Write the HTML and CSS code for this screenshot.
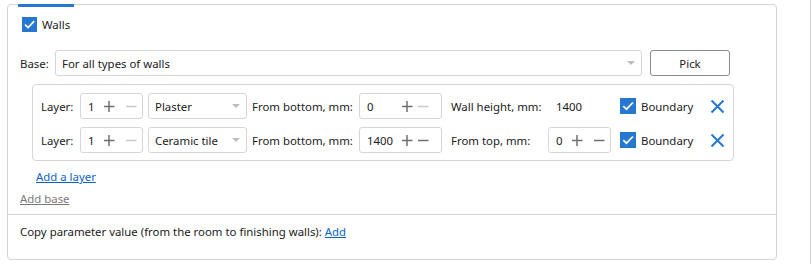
FILE: index.html
```html
<!DOCTYPE html>
<html lang="en">
<head>
    <meta charset="UTF-8">
    <title>Finishing walls</title>
    <link rel="stylesheet" href="styles.css">
</head>
<body>
    <div class="panel">
        <!-- Active tab marker -->
        <div class="tab-marker"></div>

        <div class="top-section">
            <!-- Walls -->
            <label class="check-row">
                <svg class="checkbox small" viewBox="0 0 15 15"><rect width="15" height="15" fill="#2677d1"/><path d="M3 7.6 L6.1 10.6 L12.2 4.2" fill="none" stroke="#fff" stroke-width="1.7"/></svg>
                <span>Walls</span>
            </label>

            <!-- Base -->
            <div class="base-row">
                <span class="base-label">Base:</span>
                <div class="combo wide">
                    <span>For all types of walls</span>
                    <svg class="arrow" viewBox="0 0 8 4"><path d="M0 0 L8 0 L4 4 Z" fill="#bdbdbd"/></svg>
                </div>
                <button class="pick">Pick</button>
            </div>

            <!-- Layers -->
            <div class="layers">
                <div class="layer-row">
                    <span class="lbl">Layer:</span>
                    <div class="spin">
                        <span class="val">1</span>
                        <svg class="btn" viewBox="0 0 11 11"><path d="M0 5.5 H11 M5.5 0 V11" stroke="#707070" stroke-width="1.5"/></svg>
                        <svg class="btn" viewBox="0 0 11 11"><path d="M0 5.5 H11" stroke="#c9c9c9" stroke-width="1.5"/></svg>
                    </div>
                    <div class="combo">
                        <span>Plaster</span>
                        <svg class="arrow" viewBox="0 0 8 4"><path d="M0 0 L8 0 L4 4 Z" fill="#bdbdbd"/></svg>
                    </div>
                    <span class="lbl">From bottom, mm:</span>
                    <div class="spin mm">
                        <span class="val">0</span>
                        <svg class="btn" viewBox="0 0 11 11"><path d="M0 5.5 H11 M5.5 0 V11" stroke="#707070" stroke-width="1.5"/></svg>
                        <svg class="btn" viewBox="0 0 11 11"><path d="M0 5.5 H11" stroke="#c9c9c9" stroke-width="1.5"/></svg>
                    </div>
                    <span class="lbl pad">Wall height, mm:</span>
                    <span class="plain">1400</span>
                    <label class="boundary">
                        <svg class="checkbox" viewBox="0 0 16 16"><rect width="16" height="16" fill="#2677d1"/><path d="M3.3 8.1 L6.5 11.2 L12.9 4.5" fill="none" stroke="#fff" stroke-width="1.7"/></svg>
                        <span>Boundary</span>
                    </label>
                    <svg class="remove" viewBox="0 0 15 15"><path d="M1.5 1.5 L13.5 13.5 M13.5 1.5 L1.5 13.5" stroke="#2677d1" stroke-width="2"/></svg>
                </div>
                <div class="layer-row">
                    <span class="lbl">Layer:</span>
                    <div class="spin">
                        <span class="val">1</span>
                        <svg class="btn" viewBox="0 0 11 11"><path d="M0 5.5 H11 M5.5 0 V11" stroke="#707070" stroke-width="1.5"/></svg>
                        <svg class="btn" viewBox="0 0 11 11"><path d="M0 5.5 H11" stroke="#c9c9c9" stroke-width="1.5"/></svg>
                    </div>
                    <div class="combo">
                        <span>Ceramic tile</span>
                        <svg class="arrow" viewBox="0 0 8 4"><path d="M0 0 L8 0 L4 4 Z" fill="#bdbdbd"/></svg>
                    </div>
                    <span class="lbl">From bottom, mm:</span>
                    <div class="spin mm">
                        <span class="val">1400</span>
                        <svg class="btn" viewBox="0 0 11 11"><path d="M0 5.5 H11 M5.5 0 V11" stroke="#707070" stroke-width="1.5"/></svg>
                        <svg class="btn" viewBox="0 0 11 11"><path d="M0 5.5 H11" stroke="#707070" stroke-width="1.5"/></svg>
                    </div>
                    <span class="lbl pad">From top, mm:</span>
                    <div class="spin">
                        <span class="val">0</span>
                        <svg class="btn" viewBox="0 0 11 11"><path d="M0 5.5 H11 M5.5 0 V11" stroke="#707070" stroke-width="1.5"/></svg>
                        <svg class="btn" viewBox="0 0 11 11"><path d="M0 5.5 H11" stroke="#707070" stroke-width="1.5"/></svg>
                    </div>
                    <label class="boundary">
                        <svg class="checkbox" viewBox="0 0 16 16"><rect width="16" height="16" fill="#2677d1"/><path d="M3.3 8.1 L6.5 11.2 L12.9 4.5" fill="none" stroke="#fff" stroke-width="1.7"/></svg>
                        <span>Boundary</span>
                    </label>
                    <svg class="remove" viewBox="0 0 15 15"><path d="M1.5 1.5 L13.5 13.5 M13.5 1.5 L1.5 13.5" stroke="#2677d1" stroke-width="2"/></svg>
                </div>
            </div>

            <a class="link add-layer" href="#">Add a layer</a>
            <a class="link muted" href="#">Add base</a>
        </div>

        <!-- Copy parameter -->
        <div class="bottom-section">
            Copy parameter value (from the room to finishing walls): <a class="link" href="#">Add</a>
        </div>
    </div>

    <div class="edge"></div>
</body>
</html>
```

FILE: styles.css
```css
body {
    margin: 0;
    width: 812px;
    height: 264px;
    overflow: hidden;
    background: #fff;
    color: #1b1b1b;
    font-family: "Noto Sans", "Segoe UI", sans-serif;
    font-size: 11.4px;
    display: flex;
    align-items: flex-start;
}

.panel {
    position: relative;
    box-sizing: border-box;
    width: 770px;
    height: 256px;
    margin: 4px 0 0 7px;
    border: 1px solid #d3d3d3;
    border-radius: 4px;
}

.tab-marker {
    position: absolute;
    left: 10px;
    top: -1px;
    width: 56px;
    height: 3px;
    background: #2677d1;
}

.edge {
    width: 1px;
    height: 264px;
    margin-left: auto;
    margin-right: 1px;
    background: #d3d3d3;
}

.top-section {
    padding: 12px 12px 7px;
    display: flex;
    flex-direction: column;
    align-items: flex-start;
}

/* Checkbox rows */
.check-row {
    display: flex;
    align-items: center;
    gap: 5px;
    height: 15px;
    margin-left: 2px;
}

.checkbox {
    width: 16px;
    height: 16px;
    flex: none;
}

.checkbox.small {
    width: 15px;
    height: 15px;
}

/* Base */
.base-row {
    display: flex;
    align-items: center;
    margin-top: 18px;
    height: 26px;
}

.base-label {
    width: 35px;
}

.combo {
    box-sizing: border-box;
    height: 26px;
    width: 99px;
    border: 1px solid #d6d6d6;
    border-radius: 3px;
    padding: 0 6px;
    display: flex;
    align-items: center;
    justify-content: space-between;
    white-space: nowrap;
}

.combo.wide {
    width: 587px;
}

.arrow {
    width: 8px;
    height: 4px;
    flex: none;
}

.pick {
    box-sizing: border-box;
    width: 80px;
    height: 26px;
    margin-left: 8px;
    background: #fff;
    border: 1px solid #8a8a8a;
    border-radius: 3px;
    font: inherit;
    color: #1b1b1b;
    padding: 0;
}

/* Layers */
.layers {
    box-sizing: border-box;
    width: 702px;
    margin: 8px 0 0 12px;
    padding: 8px 8px 7px;
    border: 1px solid #d6d6d6;
    border-radius: 4px;
    display: flex;
    flex-direction: column;
    gap: 8px;
}

.layer-row {
    display: grid;
    grid-template-columns: 34px 63px 99px 102px 83px 96px 63px 80px 15px;
    column-gap: 5px;
    align-items: center;
    height: 26px;
    white-space: nowrap;
}

.lbl.pad {
    padding-left: 4px;
}

.plain {
    padding-left: 8px;
}

.spin {
    box-sizing: border-box;
    height: 26px;
    border: 1px solid #d6d6d6;
    border-radius: 3px;
    padding-left: 7px;
    display: flex;
    align-items: center;
}

.spin .val {
    flex: 1;
}

.spin .btn {
    width: 11px;
    height: 11px;
    padding: 0 5.5px;
}

.spin.mm {
    padding-right: 10px;
}

.spin.mm .btn {
    padding: 0 2.5px;
}

.boundary {
    display: flex;
    align-items: center;
    gap: 5px;
    padding-left: 4px;
}

.remove {
    width: 15px;
    height: 15px;
    margin-left: 9px;
}

/* Links */
.link {
    color: #0b63c6;
    text-decoration: underline;
    line-height: 16px;
}

.add-layer {
    margin: 8px 0 0 16px;
}

.link.muted {
    color: #7a7a7a;
    margin-top: 6px;
}

.bottom-section {
    border-top: 1px solid #d3d3d3;
    padding: 9px 12px 0;
    line-height: 16px;
}
```
